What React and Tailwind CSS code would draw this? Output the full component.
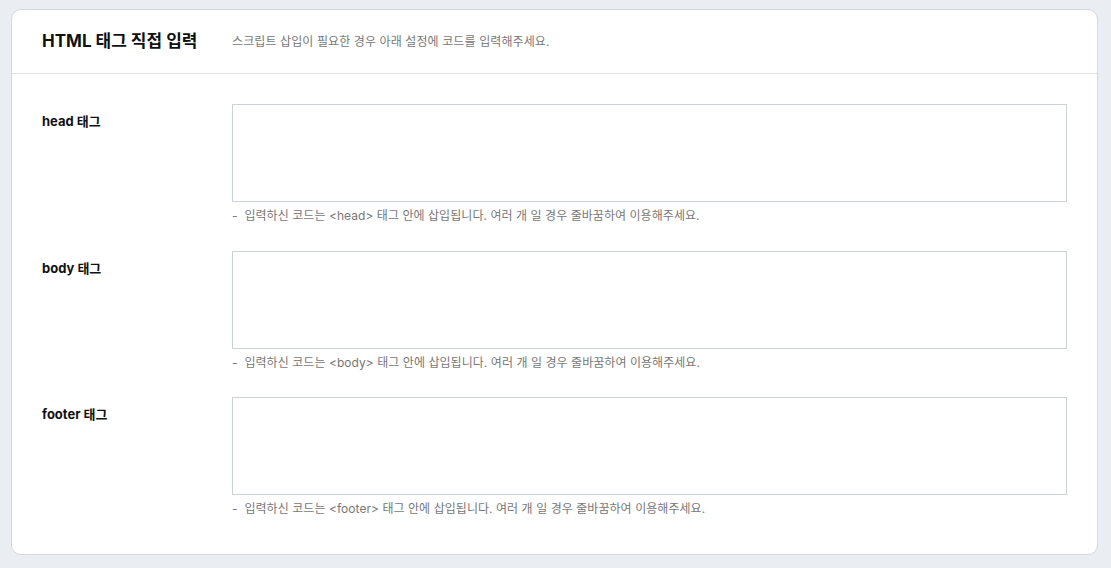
import React from 'react';

const rows = [
  { label: 'head 태그', tag: '<head>' },
  { label: 'body 태그', tag: '<body>' },
  { label: 'footer 태그', tag: '<footer>' },
];

export default function App() {
  return (
    <div
      className="min-h-screen bg-[#eaedf1] pl-[11px] pr-[13px] pt-[9px] pb-[13px]"
      style={{ fontFamily: 'Inter, "Noto Sans CJK KR", sans-serif' }}
    >
      <div className="bg-white border border-[#d3d8df] rounded-[10px]">
        {/* header */}
        <div className="h-[64px] flex items-center px-[30px] border-b border-[#dde1e6]">
          <h2 className="text-[17px] font-bold text-[#111] w-[190px]">HTML 태그 직접 입력</h2>
          <p className="text-[12px] tracking-[0.1px] text-[#777]">스크립트 삽입이 필요한 경우 아래 설정에 코드를 입력해주세요.</p>
        </div>

        {/* body */}
        <div className="px-[30px] pt-[30px] pb-[36px] flex flex-col gap-[25.5px]">
          {rows.map((row) => (
            <div key={row.label} className="flex">
              <label className="w-[190px] shrink-0 pt-[8px] text-[13px] leading-[18px] font-bold text-[#111]">
                {row.label}
              </label>
              <div className="flex-1">
                <textarea className="block w-full h-[98px] border border-[#cdd2d9] resize-none outline-none p-2 text-[13px]" />
                <p className="mt-[5px] text-[12px] leading-[18px] tracking-[0.05px] text-[#777]">
                  -&nbsp; 입력하신 코드는 {row.tag} 태그 안에 삽입됩니다. 여러 개 일 경우 줄바꿈하여 이용해주세요.
                </p>
              </div>
            </div>
          ))}
        </div>
      </div>
    </div>
  );
}
